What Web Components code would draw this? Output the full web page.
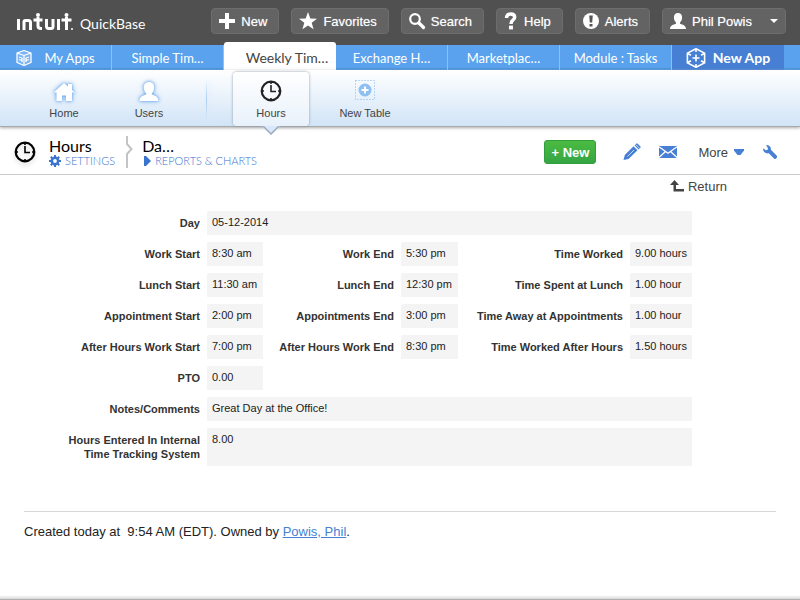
<!DOCTYPE html>
<html lang="en">
<head>
<meta charset="utf-8">
<title>Hours - QuickBase</title>
<style>
body { margin: 0; background: #fff; color: #222; font-family: "Liberation Sans", Arial, sans-serif; font-size: 13px; }
</style>
</head>
<body>
<qb-page></qb-page>
<script>
const ICONS = {
  plus: ['0 0 16 16', '<path fill="currentColor" d="M6 0h4v6h6v4h-6v6H6v-6H0V6h6z"/>'],
  star: ['0 0 18 18', '<path fill="currentColor" d="M9 0l2.3 6.4 6.7.3-5.300 4.100L14.600 17.300 9 13.500l-5.600 3.800 1.900-6.500L0 6.700l6.700-.3z"/>'],
  search: ['0 0 16 16', '<circle cx="6" cy="6" r="4.800" fill="none" stroke="currentColor" stroke-width="2.200"/><path d="M10 10l4.500 4.500" stroke="currentColor" stroke-width="3.200" stroke-linecap="round"/>'],
  help: ['0 0 14 18', '<path fill="none" stroke="currentColor" stroke-width="3.400" d="M2.500 6C2.700 3 4.300 2 6.700 2c2.500 0 4 1.200 4 3.200C10.700 8 7 7.800 7 12"/><path fill="currentColor" d="M5 13.600h4V17.400H5z"/>'],
  alert: ['0 0 16 16', '<circle cx="8" cy="8" r="8" fill="currentColor"/><path fill="#555" d="M6.200 2.500h3.600L9.200 9.500H6.800zM6.500 11h3v2.600h-3z"/>'],
  person: ['0 0 16 16', '<path fill="currentColor" d="M8 0c2.700 0 4.200 2 4.100 4.500 0 2.300-.9 4-2.100 5v1.200c2.500 1 5.900 1.500 6 5.300H0c.1-3.800 3.500-4.300 6-5.300V9.500c-1.200-1-2.100-2.700-2.100-5C3.800 2 5.300 0 8 0z"/>'],
  caret: ['0 0 8 4', '<path fill="currentColor" d="M0 0h8L4 4z"/>'],
  box: ['0 0 16 16', '<g fill="none" stroke="currentColor" stroke-width="1.300" stroke-linejoin="round"><path fill="#fff" fill-opacity=".2" d="M8 .5l7 2.500v9.500l-7 3-7-3V3z"/><path d="M1 3l7 2.500L15 3M8 5.500v10M3 7l3 1v4M13 7l-3 1v4M3 9.500l3 1M13 9.500l-3 1"/></g>'],
  newapp: ['0 0 20 20', '<g fill="none" stroke="currentColor" stroke-width="1.600"><path stroke-linejoin="round" d="M10 .8l8.600 4.300v9.800L10 19.200l-8.600-4.300V5.100z"/><path d="M10 1v3M1.400 5.300l3.600 2M18.600 5.300l-3.600 2M1.400 14.700l3.600-2M18.600 14.700l-3.600-2M10 19v-3M6.500 10h7M10 6.500v7"/></g>'],
  home: ['0 0 24 24', '<path class="glow" fill="#fff" d="M12 3l4 3.500V4h4v6l3 2.500h-3V21h-6v-5.500h-4V21H4.500v-8.500H1.500z"/>'],
  user: ['0 0 24 24', '<path class="glow" fill="#fff" d="M12 2c3.400 0 5.300 2.300 5.200 5.500 0 2.600-1 4.600-2.400 5.800v1.200c2.600 1 6.500 1.500 6.700 6.500h-19c.2-5 4.100-5.500 6.700-6.500v-1.200C7.800 12.100 6.800 10.100 6.800 7.500 6.700 4.300 8.600 2 12 2z"/>'],
  clock: ['0 0 22 22', '<circle cx="11" cy="11" r="9.300" fill="none" stroke="currentColor" stroke-width="2.200"/><path fill="none" stroke="currentColor" stroke-width="1.600" d="M11 5v6.500h5M11 2v2M11 18v2M2 11h2M18 11h2"/>'],
  addtable: ['0 0 20 20', '<path fill="none" stroke="#7fb4ee" stroke-dasharray="1 2" d="M.5.500h19v19H.5z"/><circle cx="10" cy="10" r="6.500" fill="#8fc0f4"/><path stroke="#fff" stroke-width="2" d="M10 6.500v7M6.500 10h7"/>'],
  gear: ['0 0 12 12', '<circle cx="6" cy="6" r="3.200" fill="none" stroke="currentColor" stroke-width="2.600"/><path stroke="currentColor" stroke-width="2" d="M6 0v2M6 10v2M0 6h2M10 6h2M1.800 1.800l1.400 1.400M8.800 8.800l1.400 1.400M1.800 10.200l1.400-1.400M8.800 3.200l1.400-1.400"/>'],
  play: ['0 0 7 10', '<path fill="currentColor" d="M0 0h2l5 5-5 5H0z"/>'],
  chevron: ['0 0 8 32', '<path fill="none" stroke="#c4c4c4" stroke-width="2" d="M2 0v8l4.500 5L2 18v14"/>'],
  pencil: ['0 0 18 18', '<path fill="currentColor" d="M.5 17l1.300-5L10.500 3.300l4 4L5.500 16zM11.500 2.300l1.800-1.800h1.200l3 3v1.200l-2 1.800z"/><path stroke="#fff" stroke-width=".7" d="M12.500 1.300l4.200 4.200M4.500 13.500l6.500-6.500"/>'],
  mail: ['0 0 18 12', '<path fill="currentColor" d="M0 0h18v12H0z"/><path fill="none" stroke="#fff" stroke-width="1.300" d="M0 .800l9 6.400 9-6.400M0 11.500l6.200-5.700M18 11.500l-6.200-5.700"/>'],
  down: ['0 0 10 6', '<path fill="currentColor" d="M0 0h10v1.500L6.500 6h-3L0 1.500z"/>'],
  wrench: ['0 0 14 14', '<path fill="currentColor" d="M3 .3C6-.3 8.300 1.800 7.900 4.800l6.100 6.200v1.500L12.500 14H11.500L5.800 8.300C2.800 8.800.2 7 0 4l.5-.500 2.300 1.800 1.700-.3.500-1.700z"/>'],
  back: ['0 0 14 12', '<path fill="currentColor" d="M4.500 0L9 5H6v4h8v2.500H3.500V5H0z"/>']
};

const define = (tag, markup, setup) => {
  const template = document.createElement('template');
  template.innerHTML = markup;
  customElements.define(tag, class extends HTMLElement {
    connectedCallback() {
      if (this.shadowRoot) return;
      const root = this.attachShadow({ mode: 'open' });
      root.append(template.content.cloneNode(true));
      if (setup) setup(this, root);
    }
  });
};

define('qb-icon', `
<style>
:host { display: inline-flex; flex: none; }
svg { display: block; overflow: visible; }
.glow { filter: drop-shadow(0 0 1px #6fabec) drop-shadow(0 0 2px #7fb3ee); }
</style><svg aria-hidden="true"></svg>`, (el, root) => {
  const [box, body] = ICONS[el.getAttribute('name')];
  const svg = root.querySelector('svg');
  const [, , w, h] = box.split(' ');
  svg.setAttribute('viewBox', box);
  svg.setAttribute('width', w);
  svg.setAttribute('height', h);
  svg.innerHTML = body;
});

define('qb-tool-button', `
<style>
:host { display: block; }
button { display: flex; align-items: center; gap: 6px; height: 26px; padding: 0 11px 0 7px; border: 1px solid #6d6d6d; border-radius: 4px; background: #636363; color: #fff; font: inherit; text-shadow: 0 0 1px #bbb; white-space: nowrap; }
</style>
<button type="button"><slot name="icon"></slot><slot></slot><slot name="end"></slot></button>`);

define('qb-top-bar', `
<style>
:host { display: flex; align-items: flex-start; gap: 12px; height: 37px; padding: 8px 14px 0 16px; background: #505050; }
.brand { display: flex; align-items: flex-end; gap: 6px; margin: 5px auto 0 0; color: #fff; text-decoration: none; }
.name { font: 14px/15px Lato, sans-serif; }
.end { margin-left: 12px; margin-right: -4px; }
</style>
<a class="brand" href="#" aria-label="intuit QuickBase">
  <svg width="58" height="18" viewBox="0 0 58 18" fill="none" stroke="#fff" stroke-width="3" aria-hidden="true">
    <path d="M2.500 6v11M8 17V9q0-1.500 1.500-1.500h3q2 0 2 2V17M17.500 7h9M22 4v9q0 2.500 3 2.500h1M30.500 6v7q0 2.500 2 2.500h2.500q2 0 2-2V6M42.500 6v11M45.500 7h10M50.500 4v13"/>
    <g fill="#fff" stroke="none"><circle cx="22" cy="2" r="2"/><circle cx="50.500" cy="2" r="2"/><circle cx="56" cy="16" r="1"/></g>
  </svg>
  <span class="name">QuickBase</span>
</a>
<qb-tool-button><qb-icon slot="icon" name="plus"></qb-icon>New</qb-tool-button>
<qb-tool-button><qb-icon slot="icon" name="star"></qb-icon>Favorites</qb-tool-button>
<qb-tool-button><qb-icon slot="icon" name="search"></qb-icon>Search</qb-tool-button>
<qb-tool-button><qb-icon slot="icon" name="help"></qb-icon>Help</qb-tool-button>
<qb-tool-button><qb-icon slot="icon" name="alert"></qb-icon>Alerts</qb-tool-button>
<qb-tool-button><qb-icon slot="icon" name="person"></qb-icon>Phil Powis<qb-icon class="end" slot="end" name="caret"></qb-icon></qb-tool-button>`);

define('qb-app-tab', `
<style>
:host { display: flex; flex: 1 1 0; min-width: 0; }
a { display: flex; flex: 1; align-items: center; justify-content: center; gap: 12px; height: 25px; box-sizing: border-box; padding-top: 1px; border-right: 1px solid #8cc0f6; box-shadow: inset 0 -2px #4a93db; color: #fff; text-decoration: none; white-space: nowrap; }
:host([selected]) a { height: 28px; padding: 3px 0 0 14px; border: 0; border-radius: 3px 3px 0 0; background: #fff; box-shadow: none; color: #444; font-size: 14px; }
:host([strong]) a { gap: 7px; border: 0; background: #467fd3; box-shadow: none; font-weight: bold; font-size: 14px; }
</style>
<a href="#"><slot></slot></a>`);

define('qb-app-tabs', `
<style>
:host { display: block; margin-top: -3px; background: linear-gradient(#505050 3px, #5aa2ed 3px, #5aa2ed 26px, #4a93db 26px); }
nav { display: flex; align-items: flex-end; height: 28px; padding-right: 16px; font: 13px/18px Lato, sans-serif; }
</style>
<nav aria-label="Apps">
<qb-app-tab><qb-icon name="box"></qb-icon>My Apps</qb-app-tab>
<qb-app-tab>Simple Tim…</qb-app-tab>
<qb-app-tab selected>Weekly Tim…</qb-app-tab>
<qb-app-tab>Exchange H…</qb-app-tab>
<qb-app-tab>Marketplac…</qb-app-tab>
<qb-app-tab>Module : Tasks</qb-app-tab>
<qb-app-tab strong><qb-icon name="newapp"></qb-icon>New App</qb-app-tab>
</nav>`);

define('qb-table-tab', `
<style>
:host { display: block; position: relative; }
a { display: flex; flex-direction: column; align-items: center; justify-content: space-between; box-sizing: border-box; height: 54px; padding: 8px 0 6px; color: #444; font-size: 11px; line-height: 14px; text-decoration: none; white-space: nowrap; }
:host([selected]) a { border-radius: 4px; background: linear-gradient(#fff, #e8f1fb); box-shadow: 0 0 3px #8d9aa8; color: #444; }
:host([selected]) ::slotted(qb-icon) { color: #222; }
.pointer { display: none; }
:host([selected]) .pointer { display: block; position: absolute; left: 50%; top: 54px; margin-left: -9px; }
</style>
<a href="#"><slot name="icon"></slot><span><slot></slot></span></a>
<svg class="pointer" width="18" height="10" viewBox="0 0 18 10" aria-hidden="true"><path fill="#d9e8f8" d="M0 0h18L9 9z"/><path fill="none" stroke="#9aacc0" stroke-width="1.500" d="M1 0l8 8 8-8"/></svg>`);

define('qb-table-tabs', `
<style>
:host { display: block; position: relative; background: linear-gradient(#fff, #d1e4f7); border-bottom: 1px solid #aaa; box-shadow: 0 1px 3px #aaa; }
nav { display: grid; grid-template-columns: 86px 84px 42px 76px 112px; height: 54px; padding: 2px 0 0 21px; }
hr { width: 1px; height: 40px; margin: 8px 0 0 15px; border: 0; background: linear-gradient(#fff0, #a9cdf0, #fff0); box-shadow: 2px 0 5px #d5e7fa; }
</style>
<nav aria-label="Tables">
<qb-table-tab><qb-icon slot="icon" name="home"></qb-icon>Home</qb-table-tab>
<qb-table-tab><qb-icon slot="icon" name="user"></qb-icon>Users</qb-table-tab>
<hr>
<qb-table-tab selected><qb-icon slot="icon" name="clock"></qb-icon>Hours</qb-table-tab>
<qb-table-tab><qb-icon slot="icon" name="addtable"></qb-icon>New Table</qb-table-tab>
</nav>`);

define('qb-record-header', `
<style>
:host { display: flex; align-items: center; box-sizing: border-box; height: 48px; padding: 3px 23px 0 14px; border-bottom: 1px solid #ccc; }
.clock { color: #000; filter: drop-shadow(0 3px 2px #ddd); }
.crumb { margin-left: 13px; font-family: Lato, sans-serif; }
h1, h2 { margin: 0; color: #000; font-size: 16px; line-height: 17px; font-weight: normal; }
.crumb a { display: flex; align-items: center; gap: 4px; color: #3a74cf; font-size: 11px; line-height: 14px; font-weight: 300; text-decoration: none; }
.sep { margin-left: 10px; }
.sep + .crumb { margin-left: 9px; }
.sep + .crumb a { padding-left: 2px; }
.actions { display: flex; align-items: center; margin-left: auto; color: #467fd3; }
button { padding: 0; border: 0; background: none; color: inherit; font: inherit; }
.actions button { display: flex; align-items: center; }
.actions .add { height: 24px; padding: 0 6px; border: 1px solid #2f9e3d; border-radius: 3px; background: linear-gradient(#4bbb42, #35a544); color: #fff; font-weight: bold; margin-right: 27px; }
.edit { margin-right: 18px; }
.mail { margin-right: 21px; }
.actions .more { gap: 6px; margin-right: 19px; }
.more span { color: #444; }
</style>
<qb-icon class="clock" name="clock"></qb-icon>
<div class="crumb"><h1>Hours</h1><a href="#"><qb-icon name="gear"></qb-icon>SETTINGS</a></div>
<qb-icon class="sep" name="chevron"></qb-icon>
<div class="crumb"><h2>Da…</h2><a href="#"><qb-icon name="play"></qb-icon>REPORTS &amp; CHARTS</a></div>
<div class="actions">
<button class="add" type="button">+ New</button>
<button class="edit" type="button" aria-label="Edit"><qb-icon name="pencil"></qb-icon></button>
<button class="mail" type="button" aria-label="Email"><qb-icon name="mail"></qb-icon></button>
<button class="more" type="button"><span>More</span><qb-icon name="down"></qb-icon></button>
<button type="button" aria-label="Customize"><qb-icon name="wrench"></qb-icon></button>
</div>`);

define('qb-record', `
<style>
:host { display: block; padding: 3px 24px 0; }
.return { display: flex; align-items: center; gap: 4px; width: max-content; height: 16px; margin: 0 49px 0 auto; color: #444; text-decoration: none; }
dl { display: grid; grid-template-columns: 176fr 56fr 124fr 57fr 158fr 62fr 77fr; gap: 7px; margin: 17px 0 0; font-size: 11px; line-height: 14px; }
dt { padding-top: 5px; color: #333; font-weight: bold; text-align: right; white-space: nowrap; }
dd { margin: 0; padding: 4px 5px 6px; background: #f4f4f4; border-radius: 2px 0 0 0; color: #222; white-space: nowrap; }
.first { grid-column: 1; }
.wide { grid-column: 2 / 7; }
.tall { padding-bottom: 5px; }
</style>
<a class="return" href="#"><qb-icon name="back"></qb-icon>Return</a>
<dl>
<dt class="first">Day</dt><dd class="wide">05-12-2014</dd>
<dt class="first">Work Start</dt><dd>8:30 am</dd><dt>Work End</dt><dd>5:30 pm</dd><dt>Time Worked</dt><dd>9.00 hours</dd>
<dt class="first">Lunch Start</dt><dd>11:30 am</dd><dt>Lunch End</dt><dd>12:30 pm</dd><dt>Time Spent at Lunch</dt><dd>1.00 hour</dd>
<dt class="first">Appointment Start</dt><dd>2:00 pm</dd><dt>Appointments End</dt><dd>3:00 pm</dd><dt>Time Away at Appointments</dt><dd>1.00 hour</dd>
<dt class="first">After Hours Work Start</dt><dd>7:00 pm</dd><dt>After Hours Work End</dt><dd>8:30 pm</dd><dt>Time Worked After Hours</dt><dd>1.50 hours</dd>
<dt class="first">PTO</dt><dd>0.00</dd>
<dt class="first">Notes/Comments</dt><dd class="wide">Great Day at the Office!</dd>
<dt class="first tall">Hours Entered In Internal<br>Time Tracking System</dt><dd class="wide">8.00</dd>
</dl>`);

define('qb-record-footer', `
<style>
:host { display: block; margin: 45px 24px 0; padding-top: 12px; border-top: 1px solid #d8d8d8; line-height: 16px; }
a { color: #467fd3; }
</style>
Created today at &nbsp;9:54 AM (EDT). Owned by <a href="#">Powis, Phil</a>.`);

define('qb-page', `
<style>
:host { display: flex; flex-direction: column; min-height: 100vh; }
.edge { height: 4px; margin-top: auto; border-bottom: 1px solid #b0b0b0; background: linear-gradient(#fff, #d8d8d8); }
</style>
<header><qb-top-bar></qb-top-bar></header>
<qb-app-tabs></qb-app-tabs>
<qb-table-tabs></qb-table-tabs>
<main><qb-record-header></qb-record-header><qb-record></qb-record></main>
<qb-record-footer></qb-record-footer>
<div class="edge"></div>`);
</script>
</body>
</html>
